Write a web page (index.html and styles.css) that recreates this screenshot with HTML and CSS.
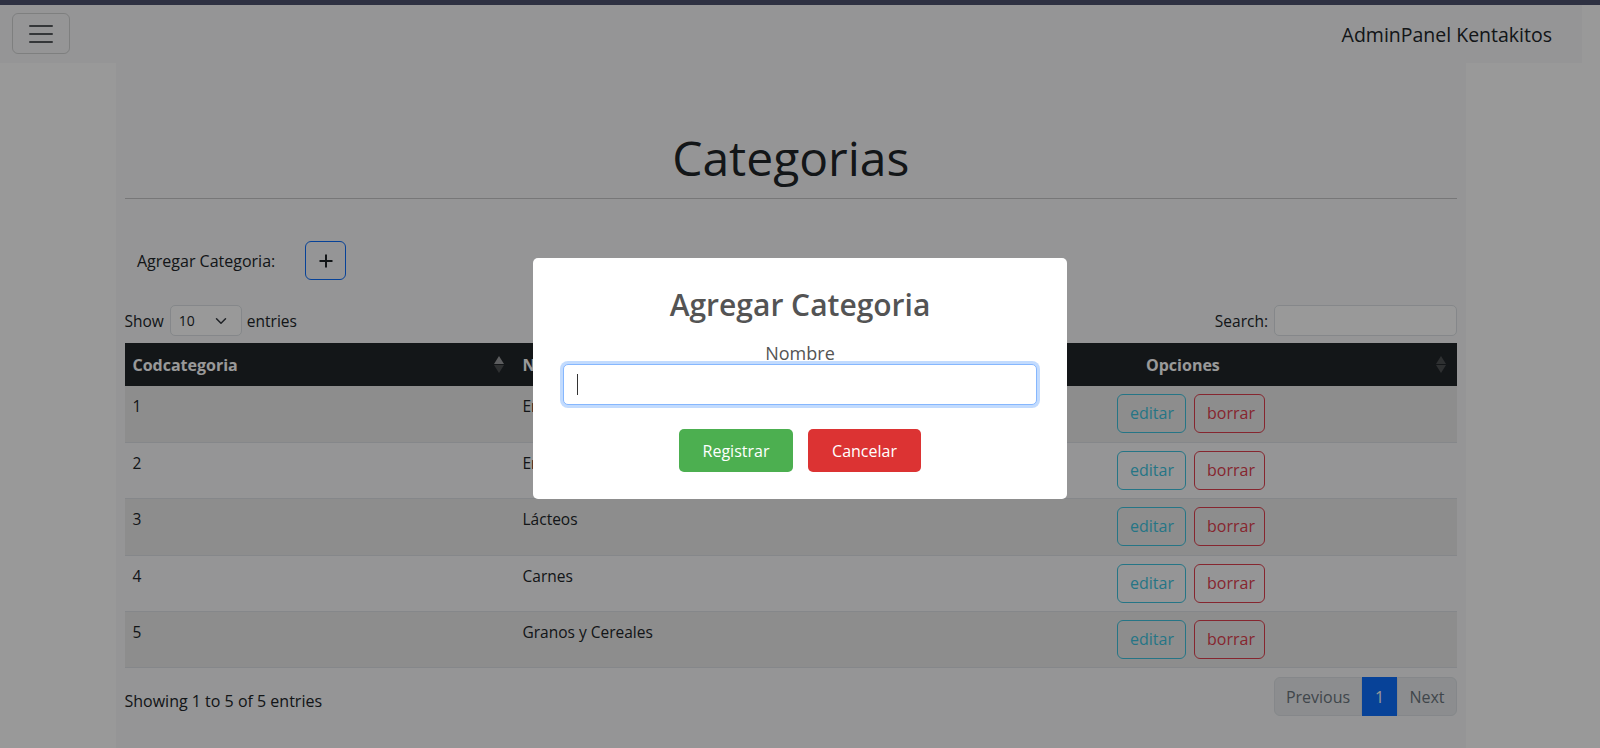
FILE: index.html
```html
<!DOCTYPE html>
<html lang="es">
<head>
<meta charset="utf-8">
<title>AdminPanel Kentakitos - Categorias</title>
<link rel="stylesheet" href="styles.css">
</head>
<body>
<div class="topstrip"></div>
<div class="page">
  <nav class="navbar">
    <button class="toggler" type="button" aria-label="menu">
      <svg width="30" height="30" viewBox="0 0 30 30"><path d="M4 7h22M4 15h22M4 23h22" stroke="rgba(33,37,41,.75)" stroke-width="2" stroke-linecap="round"/></svg>
    </button>
    <span class="brand">AdminPanel Kentakitos</span>
  </nav>
  <main class="container">
    <h1 class="title">Categorias</h1>
    <hr class="rule">
    <div class="add-row">
      <span class="add-label">Agregar Categoria:</span>
      <button class="add-btn" type="button" aria-label="Agregar">
        <svg width="14" height="14" viewBox="0 0 14 14"><path d="M7 0.5v13M0.5 7h13" stroke="#212529" stroke-width="2"/></svg>
      </button>
    </div>
    <div class="dt-top">
      <div class="dt-length">Show <span class="select">10 <svg width="12" height="12" viewBox="0 0 16 16"><path d="M2 5l6 6 6-6" fill="none" stroke="#343a40" stroke-width="2" stroke-linecap="round" stroke-linejoin="round"/></svg></span> entries</div>
      <div class="dt-search">Search: <span class="search-input"></span></div>
    </div>
    <table class="table">
      <colgroup><col class="c1"><col class="c2"><col class="c3"></colgroup>
      <thead>
        <tr>
          <th class="sorting asc">Codcategoria<span class="sort"><i class="up"></i><i class="down"></i></span></th>
          <th>Nombre</th>
          <th class="sorting opc">Opciones<span class="sort"><i class="up dim"></i><i class="down"></i></span></th>
        </tr>
      </thead>
      <tbody>
        <tr class="odd"><td>1</td><td>Enlatados</td><td><span class="btn info">editar</span><span class="btn danger">borrar</span></td></tr>
        <tr><td>2</td><td>Embutidos</td><td><span class="btn info">editar</span><span class="btn danger">borrar</span></td></tr>
        <tr class="odd"><td>3</td><td>Lácteos</td><td><span class="btn info">editar</span><span class="btn danger">borrar</span></td></tr>
        <tr><td>4</td><td>Carnes</td><td><span class="btn info">editar</span><span class="btn danger">borrar</span></td></tr>
        <tr class="odd"><td>5</td><td>Granos y Cereales</td><td><span class="btn info">editar</span><span class="btn danger">borrar</span></td></tr>
      </tbody>
    </table>
    <div class="dt-bottom">
      <div class="dt-info">Showing 1 to 5 of 5 entries</div>
      <div class="pagination">
        <span class="page-link disabled first">Previous</span>
        <span class="page-link active">1</span>
        <span class="page-link disabled last">Next</span>
      </div>
    </div>
  </main>
</div>
<div class="backdrop">
  <div class="modal" role="dialog">
    <h2 class="modal-title">Agregar Categoria</h2>
    <label class="modal-label">Nombre</label>
    <div class="input-wrap">
      <span class="modal-input"></span>
      <span class="caret"></span>
    </div>
    <div class="actions">
      <button class="sbtn confirm" type="button">Registrar</button>
      <button class="sbtn cancel" type="button">Cancelar</button>
    </div>
  </div>
</div>
</body>
</html>
```
FILE: styles.css
```css
* { box-sizing: border-box; }
html, body { margin: 0; padding: 0; }
body {
  background: #fff;
  font-family: "Open Sans", "Noto Sans", sans-serif;
  font-size: 16px;
  color: #212529;
  height: 748px;
  overflow: hidden;
}
.topstrip { height: 5px; background: #4e526e; }
.page { width: 1582px; }
.navbar {
  height: 58px;
  background: #f8f9fa;
  display: flex;
  justify-content: space-between;
  align-items: flex-start;
  padding: 8px 30px 0 12px;
}
.toggler {
  width: 58px; height: 41px;
  border: 1px solid rgba(0,0,0,.15);
  border-radius: 6px;
  background: transparent;
  display: flex; align-items: center; justify-content: center;
  padding: 0;
}
.brand { font-size: 19.5px; line-height: 24px; margin-top: 10px; color: #212529; }
.container {
  width: 1350px;
  margin-left: 116px;
  background: #f8f9fa;
  padding: 66px 9px 40px 8.5px;
  min-height: 700px;
}
.title {
  margin: 0;
  text-align: center;
  font-size: 48px;
  font-weight: 400;
  line-height: 58px;
  color: #212529;
}
.rule { margin: 11px 0 0; border: 0; border-top: 1px solid #c6c7c8; }
.add-row { display: flex; align-items: center; margin-top: 42px; padding-left: 12.5px; }
.add-label { width: 168px; font-size: 16px; }
.add-btn {
  width: 41px; height: 39px;
  border: 1px solid #0d6efd;
  border-radius: 6px;
  background: transparent;
  display: flex; align-items: center; justify-content: center;
  padding: 0;
}
.dt-top { display: flex; justify-content: space-between; align-items: center; margin-top: 25px; height: 31px; }
.dt-length, .dt-search { display: flex; align-items: center; font-size: 15.5px; }
.select {
  display: inline-flex; align-items: center; justify-content: space-between;
  width: 72px; height: 31px;
  margin: 0 5px 0 6px;
  padding: 0 14px 0 8px;
  border: 1px solid #dee2e6;
  border-radius: 5px;
  background: #fff;
  font-size: 14px;
}
.search-input {
  display: inline-block; width: 183px; height: 31px; margin-left: 6px;
  border: 1px solid #dee2e6; border-radius: 5px; background: #fff;
}
.table { width: 1332.5px; border-collapse: collapse; margin-top: 7px; }
.c1 { width: 390px; } .c2 { width: 594.5px; } .c3 { width: 348px; }
.table th {
  background: #212529; color: #fff;
  text-align: left; font-weight: 700; font-size: 16px;
  height: 43px; padding: 0 8px; position: relative;
}
.table th.opc { padding-left: 37px; }
.sort { position: absolute; right: 10px; top: 13px; width: 12px; height: 18px; }
.sort i { position: absolute; left: 1px; width: 0; height: 0; border-left: 5px solid transparent; border-right: 5px solid transparent; }
.sort .up { top: 0; border-bottom: 8px solid rgba(255,255,255,.55); }
.sort .down { top: 9px; border-top: 8px solid rgba(255,255,255,.2); }
.sort .up.dim { border-bottom-color: rgba(255,255,255,.2); }
.table td {
  height: 56.4px; padding: 8px; vertical-align: top;
  font-size: 15.5px; line-height: 24px;
  border-bottom: 1px solid #dee2e6;
}
.table tr.odd td { background: #ebeceb; }
.btn {
  display: inline-block; height: 39px; line-height: 37px;
  padding: 0 12px; border-radius: 6px; border: 1px solid; font-size: 16px;
  margin-right: 8px; text-align: center;
}
.btn.info { color: #3fc4e0; border-color: #3fc4e0; width: 69px; }
.btn.danger { color: #e0404f; border-color: #e0404f; width: 71px; }
.dt-bottom { display: flex; justify-content: space-between; align-items: flex-start; margin-top: 9px; }
.dt-info { margin-top: 13px; font-size: 16px; }
.pagination { display: flex; height: 39px; }
.page-link {
  display: flex; align-items: center; justify-content: center;
  height: 39px; font-size: 16px;
  background: #e9ecef; color: #6c757d;
  border: 1px solid #dee2e6;
}
.page-link.first { width: 88px; border-radius: 6px 0 0 6px; }
.page-link.last { width: 60px; border-radius: 0 6px 6px 0; }
.page-link.active { width: 35px; background: #0d6efd; border-color: #0d6efd; color: #fff; }
.backdrop {
  position: fixed; inset: 0;
  background: rgba(0,0,0,.4);
  display: flex; justify-content: center; align-items: flex-start;
}
.modal {
  margin-top: 258px;
  width: 534px; height: 241px;
  background: #fff;
  border-radius: 5px;
  padding: 29px 30px 0;
  display: flex; flex-direction: column; align-items: center;
}
.modal-title { margin: 0; font-size: 30px; line-height: 36px; font-weight: 600; color: #545454; }
.modal-label { margin-top: 19px; font-size: 18px; line-height: 22px; color: #545454; }
.input-wrap { position: relative; width: 474px; height: 41px; }
.modal-input {
  display: block; width: 100%; height: 100%;
  border: 1px solid #86b7fe; border-radius: 5px;
  box-shadow: 0 0 0 3px rgba(13,110,253,.25);
  background: #fff;
}
.caret { position: absolute; left: 14px; top: 10px; width: 1px; height: 21px; background: #333; }
.actions { display: flex; gap: 15px; margin-top: 24px; }
.sbtn {
  height: 43px; border: 0; border-radius: 5px; color: #fff;
  font-family: inherit; font-size: 16px; padding: 0;
}
.sbtn.confirm { width: 114px; background: #4caf50; }
.sbtn.cancel { width: 113px; background: #dc3333; }
```
